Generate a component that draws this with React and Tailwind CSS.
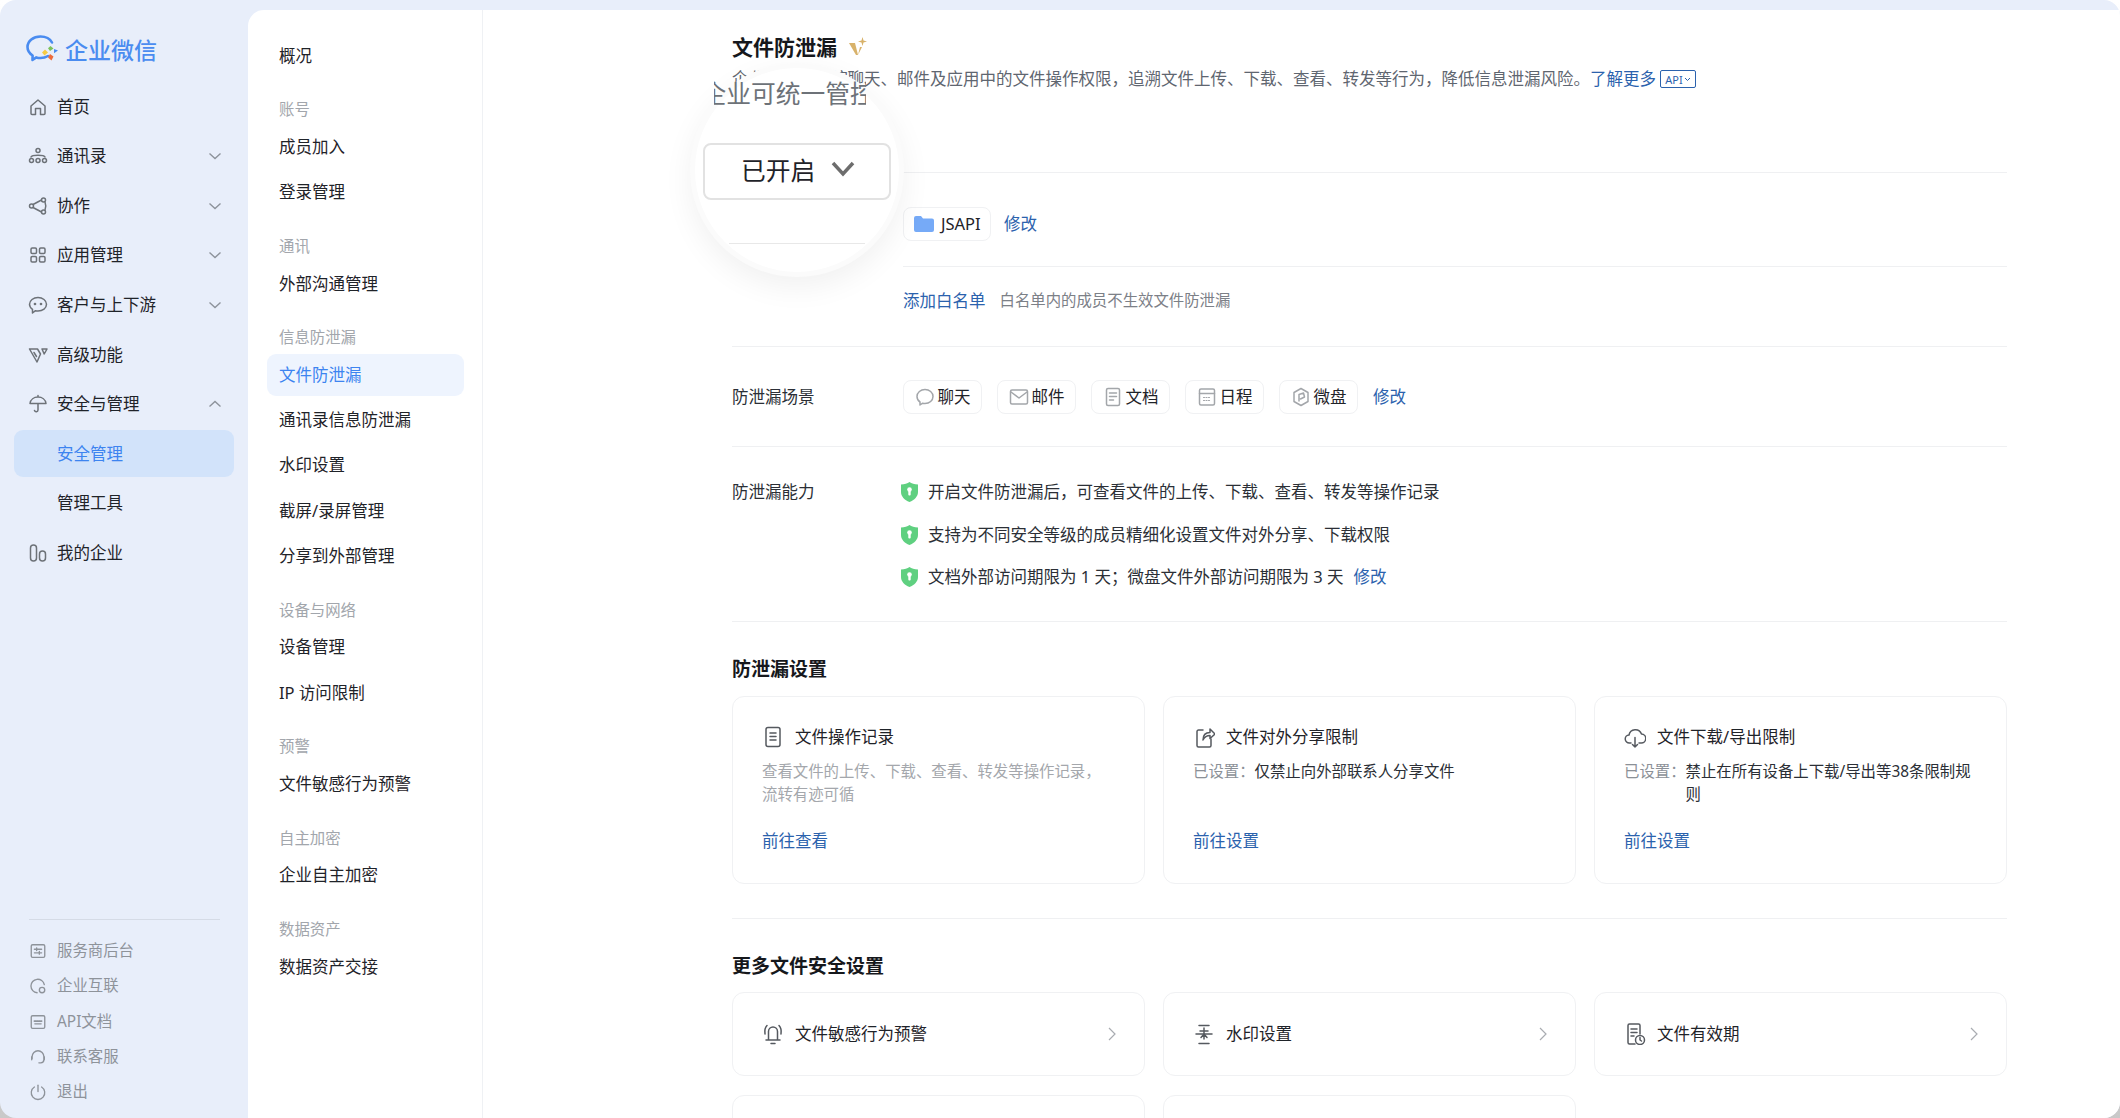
import React from 'react';

const Svg = ({ size = 20, children, className = '', box = 20 }) => (
  <svg
    width={size}
    height={size}
    viewBox={`0 0 ${box} ${box}`}
    fill="none"
    stroke="currentColor"
    strokeWidth="1.5"
    strokeLinecap="round"
    strokeLinejoin="round"
    className={`shrink-0 ${className}`}
  >
    {children}
  </svg>
);

const navIcons = {
  home: <path d="M3 9l7-6 7 6v7.5a1 1 0 0 1-1 1h-3.5v-6h-5v6H4a1 1 0 0 1-1-1z" />,
  org: (
    <>
      <circle cx="10" cy="4.5" r="2" />
      <circle cx="3.5" cy="14.5" r="2" />
      <circle cx="10" cy="14.5" r="2" />
      <circle cx="16.5" cy="14.5" r="2" />
      <path d="M3 11c1-2.5 13-2.5 14 0" />
    </>
  ),
  collab: (
    <>
      <circle cx="3.5" cy="10" r="2" />
      <circle cx="15.5" cy="4" r="2" />
      <circle cx="15.5" cy="16" r="2" />
      <path d="M5 8.5L13.5 4M5 11.5l8.5 4.5M17 6c1 2.5 1 5.5 0 8" />
    </>
  ),
  apps: (
    <>
      <rect x="3" y="3" width="5.5" height="5.5" rx="1.2" />
      <rect x="11.5" y="3" width="5.5" height="5.5" rx="1.2" />
      <rect x="3" y="11.5" width="5.5" height="5.5" rx="1.2" />
      <rect x="11.5" y="11.5" width="5.5" height="5.5" rx="1.2" />
    </>
  ),
  chat: (
    <>
      <path d="M10 2.5c4.7 0 8.5 3 8.5 6.8s-3.800 6.700-8.500 6.700c-.9 0-1.700-.1-2.500-.3L4.500 18v-3.700C2.600 13 1.500 11.300 1.500 9.300 1.500 5.500 5.300 2.500 10 2.500z" />
      <circle cx="7" cy="9" r=".6" fill="currentColor" />
      <circle cx="13" cy="9" r=".6" fill="currentColor" />
    </>
  ),
  vip: (
    <>
      <path d="M1.500 4h8l3 5-3.500 8z" />
      <path d="M14 4h5l-2.800 5z" />
      <path d="M6 7.500l2.500 4" />
    </>
  ),
  umbrella: <path d="M2 9.500C2.500 5.500 6 3 10 3s7.500 2.500 8 6.500zM10 1.500V3M10 9.500v6.500a1.800 1.800 0 0 1-3.500.5" />,
  company: (
    <>
      <rect x="2.500" y="2" width="6" height="16" rx="3" />
      <rect x="11.500" y="8" width="6" height="10" rx="3" />
    </>
  ),
  provider: (
    <>
      <rect x="2.500" y="3" width="15" height="14" rx="1.500" />
      <path d="M6 8h8M6 12h8M8.500 6.500v3M11.500 10.500v3" />
    </>
  ),
  link: (
    <>
      <path d="M17 8.500A7.500 7.500 0 1 0 9 17.500" />
      <circle cx="14.500" cy="14.500" r="3" />
    </>
  ),
  api: (
    <>
      <rect x="2.500" y="3" width="15" height="14" rx="1.500" />
      <path d="M6.500 12h7" />
      <path d="M6 9h8" strokeWidth="2" strokeDasharray="1.500 1" />
    </>
  ),
  service: <path d="M3.500 12V9.500a6.500 6.500 0 0 1 13 0V13a3.500 3.500 0 0 1-3.500 3.500h-2M3 9.500v3.500M17 9.500v3.500" />,
  power: (
    <>
      <path d="M6 4.500a7.500 7.500 0 1 0 8 0" />
      <path d="M10 2.500v7" />
    </>
  ),
};

const Chevron = ({ up }) => (
  <svg width="14" height="10" viewBox="0 0 14 10" fill="none" stroke="#8d939b" strokeWidth="1.400" className="ml-auto mr-[26px]">
    <path d={up ? 'M1.500 7.500L7 2.500l5.500 5' : 'M1.500 2.500L7 7.500l5.500-5'} />
  </svg>
);

const Logo = () => (
  <svg width="34" height="30" viewBox="0 0 34 30" fill="none" className="shrink-0">
    <path
      d="M22 21c-2.500 1.500-5 2-7.500 2-1.500 0-3-.2-4.200-.6L6.500 25l.1-4.500C3.500 18.500 1.500 15.500 1.500 12 1.500 6 7.300 1.500 14.500 1.500c5 0 9.500 2.200 11.500 6"
      stroke="#4a8cf0"
      strokeWidth="2.600"
      strokeLinecap="round"
      strokeLinejoin="round"
    />
    <path d="M24.500 11l3 2.600-3.500 2.400-2-2.800z" fill="#7cc35a" />
    <path d="M28 14l4 1.500-4 2.800z" fill="#4a8cf0" />
    <path d="M19 14.500l3 3-3.500 3-2.500-3z" fill="#f6cb45" />
    <path d="M24 19l3.500 2.500-2 4-3.500-3z" fill="#ee6b3b" />
  </svg>
);

const NavItem = ({ icon, label, arrow, up, active, plain }) => (
  <div className={`flex h-[49.56px] items-center ${active ? 'relative' : ''}`}>
    {active && <div className="absolute left-[14px] top-[1px] h-[47px] w-[220px] rounded-[9px] bg-[#d2e3fa]" />}
    <div className="flex w-[57px] shrink-0 justify-end pr-[9px] text-[#6d7278] relative">
      {icon ? <Svg size={20}>{navIcons[icon]}</Svg> : null}
    </div>
    <span className={`relative text-[16.5px] leading-6 ${active ? 'text-[#3d84f0]' : 'text-[#1f2329]'} ${plain ? '' : ''}`}>{label}</span>
    {arrow && <Chevron up={up} />}
  </div>
);

const FootItem = ({ icon, label }) => (
  <div className="flex h-[35.400px] items-center text-[#8e939a]">
    <div className="flex w-[57px] shrink-0 justify-end pr-[10px]">
      <Svg size={18}>{navIcons[icon]}</Svg>
    </div>
    <span className="text-[15.400px] leading-6">{label}</span>
  </div>
);

const Sidebar = () => (
  <div className="flex h-full w-[248px] shrink-0 flex-col">
    <div className="flex h-[30px] items-center pl-[26px] mt-[35px]">
      <Logo />
      <span className="ml-[5px] text-[23px] font-medium leading-[30px] text-[#4a8cf0]">企业微信</span>
    </div>
    <div className="mt-[17px]">
      <NavItem icon="home" label="首页" />
      <NavItem icon="org" label="通讯录" arrow />
      <NavItem icon="collab" label="协作" arrow />
      <NavItem icon="apps" label="应用管理" arrow />
      <NavItem icon="chat" label="客户与上下游" arrow />
      <NavItem icon="vip" label="高级功能" />
      <NavItem icon="umbrella" label="安全与管理" arrow up />
      <NavItem label="安全管理" active />
      <NavItem label="管理工具" />
      <NavItem icon="company" label="我的企业" />
    </div>
    <div className="mt-auto pb-[8px]">
      <div className="mx-[29px] mb-[13px] w-[191px] border-t border-[#d5dbe6]" />
      <FootItem icon="provider" label="服务商后台" />
      <FootItem icon="link" label="企业互联" />
      <FootItem icon="api" label="API文档" />
      <FootItem icon="service" label="联系客服" />
      <FootItem icon="power" label="退出" />
    </div>
  </div>
);

const menu = [
  { items: ['概况'] },
  { title: '账号', items: ['成员加入', '登录管理'] },
  { title: '通讯', items: ['外部沟通管理'] },
  { title: '信息防泄漏', items: ['文件防泄漏', '通讯录信息防泄漏', '水印设置', '截屏/录屏管理', '分享到外部管理'] },
  { title: '设备与网络', items: ['设备管理', 'IP 访问限制'] },
  { title: '预警', items: ['文件敏感行为预警'] },
  { title: '自主加密', items: ['企业自主加密'] },
  { title: '数据资产', items: ['数据资产交接'] },
];

const SubMenu = () => (
  <div className="mt-[10px] w-[235px] shrink-0 rounded-tl-[16px] border-r border-[#eff1f4] bg-white pt-[23px]">
    {menu.map((group, i) => (
      <div key={i} className={i > 0 ? 'mt-[20px]' : ''}>
        {group.title && <div className="mb-[2px] h-6 pl-[31px] text-[15.400px] leading-6 text-[#a2a6ac]">{group.title}</div>}
        {group.items.map((item) => (
          <div key={item} className="flex h-[45.300px] items-center pl-[19px]">
            <div
              className={`flex h-[42px] w-[197px] items-center rounded-[9px] pl-[12px] text-[16.500px] leading-6 ${
                item === '文件防泄漏' ? 'bg-[#eef4fe] text-[#3d84f0]' : 'text-[#1f2329]'
              }`}
            >
              {item}
            </div>
          </div>
        ))}
      </div>
    ))}
  </div>
);

const Edit = () => <span className="text-[16.500px] leading-6 text-[#2b62ad]">修改</span>;

const chipIcons = {
  聊天: (
    <>
      <path d="M10 2.500c4.400 0 8 3 8 7s-3.600 7-8 7c-.8 0-1.600-.1-2.300-.3L5 18v-3C3 13.700 2 11.700 2 9.500c0-4 3.600-7 8-7z" />
    </>
  ),
  邮件: (
    <>
      <rect x="1.500" y="3" width="17" height="14" rx="1.500" />
      <path d="M2 5l8 6 8-6" />
    </>
  ),
  文档: (
    <>
      <rect x="3.500" y="1.500" width="13" height="17" rx="1.500" />
      <path d="M6.500 6h7M6.500 9.500h7M6.500 13h4" />
    </>
  ),
  日程: (
    <>
      <rect x="2.500" y="2" width="15" height="16" rx="1.500" />
      <path d="M2.500 6.500h15" />
      <path d="M6.500 10.500h7M6.500 13.500h7" strokeWidth="1.200" strokeDasharray="1 1.500" />
    </>
  ),
  微盘: (
    <>
      <path d="M10 1.500l7 4v9l-7 4-7-4v-9z" />
      <path d="M8 14V7.500l4.500-1.500 1 4-4 2" />
    </>
  ),
};

const Chip = ({ label }) => (
  <div className="flex h-[34px] items-center gap-[3px] rounded-[8px] border border-[#f0f1f3] px-[10.500px] text-[16.500px] leading-6 text-[#1f2329]">
    <span className="text-[#a3a6aa]">
      <Svg size={20} className="block">{chipIcons[label]}</Svg>
    </span>
    {label}
  </div>
);

const Shield = () => (
  <svg width="17" height="20" viewBox="0 0 17 20" className="shrink-0">
    <path d="M8.500 0c2 1.500 5 2.300 8.500 2.500V10c0 4.500-3.500 8-8.500 10C3.500 18 0 14.500 0 10V2.500C3.500 2.300 6.500 1.500 8.500 0z" fill="#5fd080" />
    <circle cx="8.500" cy="7.500" r="2.300" fill="#fff" />
    <rect x="7.300" y="8" width="2.400" height="5.500" rx="1" fill="#fff" />
  </svg>
);

const Ability = ({ children }) => (
  <div className="flex h-6 items-center gap-[10px] text-[16.500px] leading-6 text-[#2b2f36]">
    <span className="ml-[-2px]">
      <Shield />
    </span>
    {children}
  </div>
);

const cardIcons = {
  doc: (
    <>
      <rect x="4" y="1.500" width="14" height="19" rx="2" />
      <path d="M8 7h6M8 10.500h6M8 14h6" />
    </>
  ),
  share: (
    <>
      <path d="M10 4H5.500A1.500 1.500 0 0 0 4 5.500v14A1.500 1.500 0 0 0 5.500 21h11a1.500 1.500 0 0 0 1.500-1.500V13" />
      <path d="M10 14c0-5 3-7.500 7-7.500V3l5 5-5 4.500V9.500c-3 0-5.500 1.500-7 4.500z" />
    </>
  ),
  cloud: (
    <>
      <path d="M7 17H5.500a4 4 0 0 1-.5-8A6.500 6.500 0 0 1 17.500 8a4.500 4.500 0 0 1-.5 9h-2" />
      <path d="M11 11.500V21M8.500 18.500L11 21l2.500-2.500" />
    </>
  ),
  bell: (
    <>
      <path d="M6.500 17V8.500a4.500 4.500 0 0 1 9 0V17M4 17h14M9 20.500h4" />
      <path d="M3 11C2.500 7.500 3 4.500 5 2.500M19 11c.5-3.500 0-6.500-2-8.500" />
    </>
  ),
  mark: (
    <>
      <path d="M6 2.500h10M3 11h16M6 20.500h10" />
      <path d="M11 5v11M7 8h8M8 14.500l3-3.500 3 3.500" />
    </>
  ),
  timer: (
    <>
      <path d="M11 21H5.500A1.500 1.500 0 0 1 4 19.500v-17A1.500 1.500 0 0 1 5.500 1h9A1.500 1.500 0 0 1 16 2.500V11" />
      <path d="M7 6h6M7 9.500h6M7 13h3" />
      <circle cx="16" cy="17" r="4.500" />
      <path d="M16 14.500V17l1.500 1" />
    </>
  ),
};

const Card = ({ icon, title, link, children }) => (
  <div className="flex h-[188px] flex-col rounded-[12px] border border-[#f0f1f3] pl-[29px] pr-[29px] pt-[28px]">
    <div className="flex h-6 items-center gap-[11px] text-[16.500px] leading-6 text-[#1f2329]">
      <span className="text-[#55595f]">
        <Svg size={22} box={22} className="block">{cardIcons[icon]}</Svg>
      </span>
      {title}
    </div>
    <div className="mt-[11px] h-[46px] text-[15.400px] leading-[23px]">{children}</div>
    <div className="mt-[23px] text-[16.500px] leading-6 text-[#2b62ad]">{link}</div>
  </div>
);

const LinkCard = ({ icon, title }) => (
  <div className="flex h-[84px] items-center rounded-[12px] border border-[#f0f1f3] pl-[29px] pr-[28px]">
    <span className="text-[#55595f]">
      <Svg size={22} box={22} className="block">{cardIcons[icon]}</Svg>
    </span>
    <span className="ml-[11px] text-[16.500px] leading-6 text-[#1f2329]">{title}</span>
    <svg width="8" height="14" viewBox="0 0 8 14" fill="none" stroke="#a9acb1" strokeWidth="1.200" className="ml-auto">
      <path d="M1 1l6 6-6 6" />
    </svg>
  </div>
);

const Main = () => (
  <div className="mt-[10px] min-w-0 flex-1 bg-white pl-[249px]">
    <div className="w-[1275px]">
      <div className="h-[162px] pt-[25px]">
        <div className="flex h-6 items-center gap-[12px] text-[21px] font-bold leading-6 text-[#16181c]">
          文件防泄漏
          <svg width="18" height="20" viewBox="0 0 18 20">
            <path d="M0 6h6l3 12h-2z" fill="#d8b26a" />
            <path d="M9 18l2-8h2z" fill="#d8b26a" />
            <path d="M13.500 0l1 3.500 3.500 1-3.500 1-1 3.500-1-3.500-3.500-1 3.500-1z" fill="#d8b26a" />
          </svg>
        </div>
        <div className="mt-[8px] flex h-6 items-center whitespace-nowrap text-[16.500px] leading-6 text-[#5f6670]">
          企业可统一管控聊天、邮件及应用中的文件操作权限，追溯文件上传、下载、查看、转发等行为，降低信息泄漏风险。
          <span className="text-[#2b62ad]">了解更多</span>
          <span className="ml-[4px] flex h-[18px] w-[36px] items-center justify-center rounded-[2px] border border-[#2b62ad] text-[11px] leading-none text-[#2b62ad]">
            API
            <svg width="7" height="5" viewBox="0 0 7 5" fill="none" stroke="#2b62ad" strokeWidth="1" className="ml-[1px]">
              <path d="M1 1l2.500 2.500L6 1" />
            </svg>
          </span>
        </div>
      </div>

      <div className="ml-[171px] h-[94px] border-t border-[#eff0f2] pt-[34px]">
        <div className="flex items-center gap-[13px]">
          <div className="flex h-[34px] w-[88px] items-center gap-[7px] rounded-[8px] border border-[#f0f1f3] pl-[10px] text-[16.500px] leading-6 text-[#1f2329]">
            <svg width="20" height="18" viewBox="0 0 20 18" className="shrink-0">
              <path d="M0 3a2 2 0 0 1 2-2h5l2 2.500h9a2 2 0 0 1 2 2V15a2 2 0 0 1-2 2H2a2 2 0 0 1-2-2z" fill="#76aaf7" />
            </svg>
            JSAPI
          </div>
          <Edit />
        </div>
      </div>
      <div className="ml-[171px] h-[80px] border-t border-[#eff0f2] pt-[22px]">
        <div className="flex items-center gap-[14px] leading-6">
          <span className="text-[16.500px] text-[#2b62ad]">添加白名单</span>
          <span className="text-[15.400px] text-[#7c8087]">白名单内的成员不生效文件防泄漏</span>
        </div>
      </div>

      <div className="flex h-[100px] items-center border-t border-[#eff0f2]">
        <div className="w-[171px] shrink-0 text-[16.500px] leading-6 text-[#2b2f36]">防泄漏场景</div>
        <div className="flex items-center gap-[15px]">
          <Chip label="聊天" />
          <Chip label="邮件" />
          <Chip label="文档" />
          <Chip label="日程" />
          <Chip label="微盘" />
          <Edit />
        </div>
      </div>

      <div className="flex h-[176px] border-y border-[#eff0f2] pt-[33px]">
        <div className="w-[171px] shrink-0 text-[16.500px] leading-6 text-[#2b2f36]">防泄漏能力</div>
        <div className="flex flex-col gap-[18.500px]">
          <Ability>开启文件防泄漏后，可查看文件的上传、下载、查看、转发等操作记录</Ability>
          <Ability>支持为不同安全等级的成员精细化设置文件对外分享、下载权限</Ability>
          <Ability>
            文档外部访问期限为 1 天；微盘文件外部访问期限为 3 天
            <Edit />
          </Ability>
        </div>
      </div>

      <div className="mt-[35px] text-[19px] font-bold leading-6 text-[#16181c]">防泄漏设置</div>
      <div className="mt-[15px] grid grid-cols-3 gap-x-[18px]">
        <Card icon="doc" title="文件操作记录" link="前往查看">
          <span className="text-[#a4a7ac]">查看文件的上传、下载、查看、转发等操作记录，流转有迹可循</span>
        </Card>
        <Card icon="share" title="文件对外分享限制" link="前往设置">
          <span className="text-[#8b9097]">已设置：</span>
          <span className="text-[#2b2f36]">仅禁止向外部联系人分享文件</span>
        </Card>
        <Card icon="cloud" title="文件下载/导出限制" link="前往设置">
          <div className="flex">
            <span className="shrink-0 text-[#8b9097]">已设置：</span>
            <span className="text-[#2b2f36]">禁止在所有设备上下载/导出等38条限制规则</span>
          </div>
        </Card>
      </div>

      <div className="mt-[34px] border-t border-[#eff0f2] pt-[35px] text-[19px] font-bold leading-6 text-[#16181c]">更多文件安全设置</div>
      <div className="mt-[14px] grid grid-cols-3 gap-x-[18px] gap-y-[19px]">
        <LinkCard icon="bell" title="文件敏感行为预警" />
        <LinkCard icon="mark" title="水印设置" />
        <LinkCard icon="timer" title="文件有效期" />
        <div className="h-[84px] rounded-[12px] border border-[#f0f1f3]" />
        <div className="h-[84px] rounded-[12px] border border-[#f0f1f3]" />
      </div>
    </div>
  </div>
);

// zoomed-in lens over the status select
const Magnifier = () => (
  <div className="absolute left-[690px] top-[63px] flex h-[214px] w-[214px] flex-col items-center rounded-full border-[5px] border-[#fbfbfb] bg-white pt-[13px] shadow-[0_10px_30px_rgba(0,0,0,0.06)]">
    <div className="ml-[-15px] h-[26px] w-[152px] overflow-hidden">
      <div className="ml-[-12px] whitespace-nowrap text-[24.750px] leading-[26px] text-[#6d7278]">企业可统一管控</div>
    </div>
    <div className="mt-[36px] flex h-[57px] w-[188px] items-center rounded-[8px] border-2 border-[#e2e2e2] pl-[36px] text-[24.750px] leading-none text-[#1f2329]">
      已开启
      <svg width="24" height="16" viewBox="0 0 24 16" fill="none" stroke="#6d6d6d" strokeWidth="3.500" className="ml-[16px] mt-[-6px]">
        <path d="M2 2l10 11L22 2" />
      </svg>
    </div>
    <div className="mt-[43px] w-[136px] border-t border-[#e8e8e8]" />
  </div>
);

export default function App() {
  return (
    <div className="h-[1118px] w-[2120px] overflow-hidden bg-gradient-to-b from-white to-[#c9c9c9] [font-family:'Noto_Sans','Noto_Sans_CJK_SC',sans-serif]">
      <div className="relative flex h-full w-full overflow-hidden rounded-[16px] bg-[#e8eefa]">
        <Sidebar />
        <SubMenu />
        <Main />
        <Magnifier />
      </div>
    </div>
  );
}
